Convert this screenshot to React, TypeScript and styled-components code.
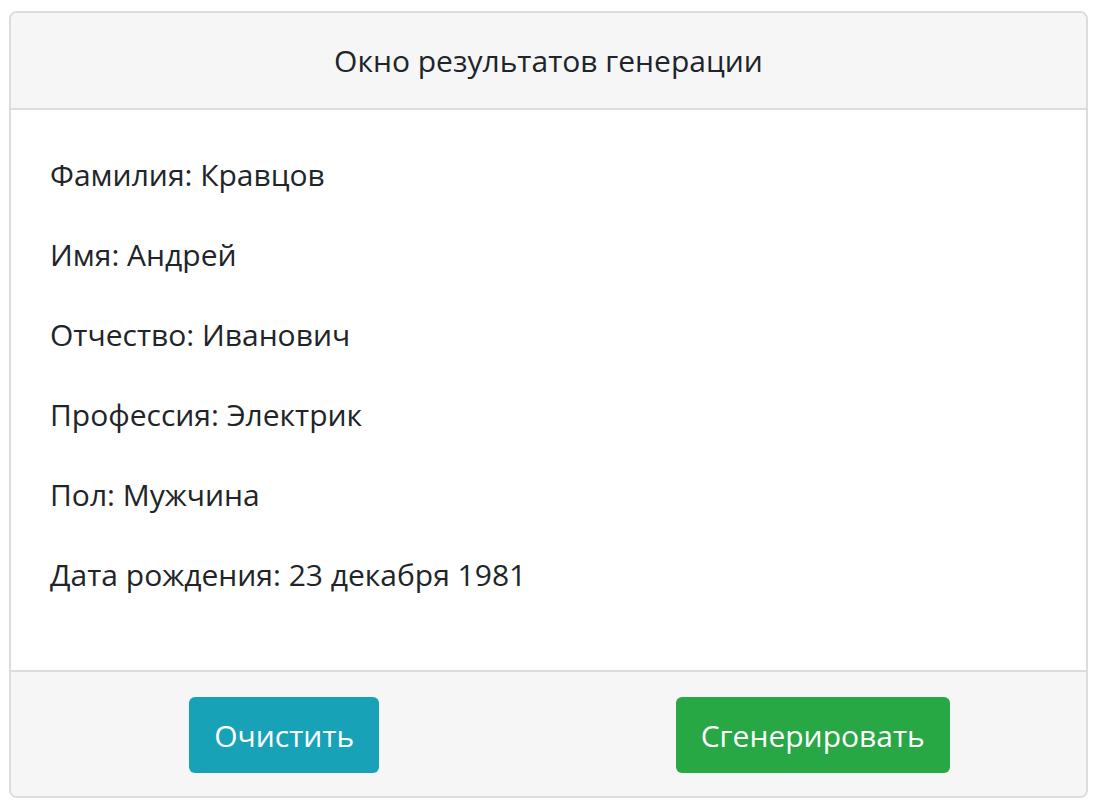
import styled, { createGlobalStyle } from 'styled-components';

const GlobalStyle = createGlobalStyle`
  html, body {
    margin: 0;
    padding: 0;
    background: #fff;
  }
  body {
    font-family: 'Open Sans', 'Noto Sans', 'Liberation Sans', sans-serif;
    color: #212529;
  }
`;

const Page = styled.div`
  padding: 11px 6px 7px 9px;
`;

const Card = styled.div`
  display: flex;
  flex-direction: column;
  border: 2px solid #dcdcdc;
  border-radius: 8px;
  overflow: hidden;
  background: #fff;
`;

const Header = styled.div`
  height: 95px;
  display: flex;
  align-items: center;
  justify-content: center;
  background: #f6f6f6;
  border-bottom: 2px solid #dcdcdc;
  font-size: 30px;
`;

const Body = styled.div`
  display: flex;
  flex-direction: column;
  gap: 40px;
  padding: 45px 39px 75px;
`;

const Line = styled.p`
  margin: 0;
  font-size: 30px;
  line-height: 40px;
`;

const Footer = styled.div`
  display: grid;
  grid-template-columns: 1fr 1fr;
  align-items: center;
  justify-items: center;
  padding: 25px 9px 23px 9px;
  background: #f6f6f6;
  border-top: 2px solid #dcdcdc;
`;

const Button = styled.button<{ $variant: 'info' | 'success' }>`
  height: 76px;
  padding: 0 25px;
  border: none;
  border-radius: 6px;
  color: #fff;
  font-family: inherit;
  font-size: 30px;
  cursor: pointer;
  background: ${(p) => (p.$variant === 'info' ? '#17a2b8' : '#28a745')};
`;

const rows = [
  'Фамилия: Кравцов',
  'Имя: Андрей',
  'Отчество: Иванович',
  'Профессия: Электрик',
  'Пол: Мужчина',
  'Дата рождения: 23 декабря 1981',
];

const App = () => {
  return (
    <>
      <GlobalStyle />
      <Page>
        <Card>
          <Header>Окно результатов генерации</Header>
          <Body>
            {rows.map((r) => (
              <Line key={r}>{r}</Line>
            ))}
          </Body>
          <Footer>
            <Button $variant="info">Очистить</Button>
            <Button $variant="success">Сгенерировать</Button>
          </Footer>
        </Card>
      </Page>
    </>
  );
};

export default App;
